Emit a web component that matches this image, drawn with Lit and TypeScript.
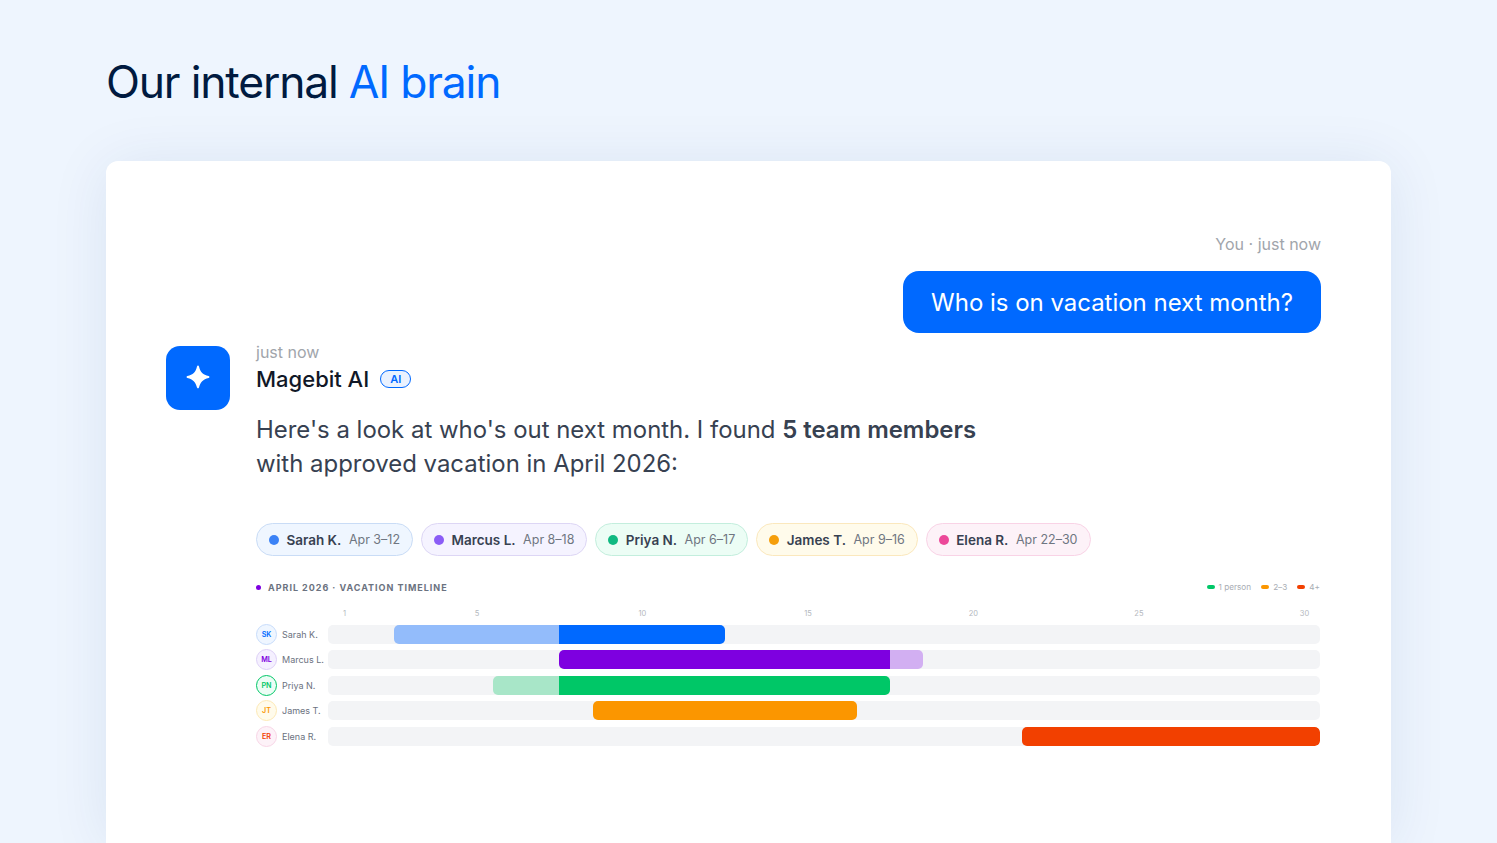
import { LitElement, html, css } from "lit";
import { customElement } from "lit/decorators.js";

const pills = [
  { n: "Sarah K.", d: "Apr 3–12", c: "#3b82f6", bg: "#eff6ff", b: "#c9dcf6" },
  { n: "Marcus L.", d: "Apr 8–18", c: "#8b5cf6", bg: "#f5f3ff", b: "#ddd6f5" },
  { n: "Priya N.", d: "Apr 6–17", c: "#10b981", bg: "#ecfdf5", b: "#c3eedd" },
  { n: "James T.", d: "Apr 9–16", c: "#f59e0b", bg: "#fffbeb", b: "#fbe8bd" },
  { n: "Elena R.", d: "Apr 22–30", c: "#ec4899", bg: "#fdf2f8", b: "#f9d3e6" },
];

const rows = [
  { n: "Sarah K.", i: "SK", c: "#0069ff", bg: "#eff6ff", b: "#c7dcfb", segs: [[3, 7, "#93bcfb"], [8, 12, "#0069ff"]] },
  { n: "Marcus L.", i: "ML", c: "#7e00e0", bg: "#f5f0ff", b: "#ddd0f7", segs: [[8, 17, "#7e00e0"], [18, 18, "#d2aff2"]] },
  { n: "Priya N.", i: "PN", c: "#00c767", bg: "#ecfdf5", b: "#00c767", segs: [[6, 7, "#a8e6c8"], [8, 17, "#00c767"]] },
  { n: "James T.", i: "JT", c: "#fb9600", bg: "#fffbeb", b: "#fde9b5", segs: [[9, 16, "#fb9600"]] },
  { n: "Elena R.", i: "ER", c: "#f24000", bg: "#fdf2f8", b: "#f8d5e6", segs: [[22, 30, "#f24000"]] },
] as const;

const ticks = [1, 5, 10, 15, 20, 25, 30];
const legend = [
  { l: "1 person", c: "#00c767" },
  { l: "2–3", c: "#fb9600" },
  { l: "4+", c: "#f24000" },
];

@customElement("app-root")
export class AppRoot extends LitElement {
  static styles = css`
    :host {
      display: flex;
      flex-direction: column;
      height: 843px;
      overflow: hidden;
      padding: 0 106px;
      box-sizing: border-box;
      background: #eef5fe;
      font-family: Inter, "Liberation Sans", sans-serif;
      color: #111827;
    }
    h1 {
      margin: 0;
      padding: 53px 0 0 0;
      height: 161px;
      flex: none;
      box-sizing: border-box;
      font-size: 44.45px;
      line-height: 58px;
      font-weight: 400;
      letter-spacing: -1.2px;
      color: #001a40;
      white-space: nowrap;
    }
    h1 span { color: #0069ff; }
    .card {
      flex: 1;
      background: #fff;
      border-radius: 12px 12px 0 0;
      box-shadow: 0 4px 60px rgba(0, 50, 120, 0.09);
      padding: 73px 70px 0 60px;
      display: flex;
      flex-direction: column;
    }
    .you {
      display: flex;
      flex-direction: column;
      align-items: flex-end;
      gap: 16px;
    }
    .meta {
      font-size: 16px;
      line-height: 21px;
      color: #a1a5ab;
    }
    .body .meta { margin-top: 1px; }
    .bubble {
      background: #0069ff;
      color: #fff;
      border-radius: 16px;
      height: 62px;
      padding: 0 28px;
      display: flex;
      align-items: center;
      font-size: 24px;
      letter-spacing: -0.02px;
    }
    .ai {
      display: flex;
      gap: 26px;
      margin-top: 8px;
    }
    .avatar {
      width: 64px;
      height: 64px;
      margin-top: 5px;
      flex: none;
      border-radius: 14px;
      background: #0069ff;
      display: flex;
      align-items: center;
      justify-content: center;
    }
    .avatar svg { width: 24px; height: 24px; margin-top: -2px; }
    .body { flex: 1; min-width: 0; }
    .name-row {
      display: flex;
      align-items: center;
      gap: 11px;
      height: 30px;
      margin-top: 1px;
      font-size: 22px;
      font-weight: 500;
      color: #111827;
    }
    .tag {
      width: 31px;
      height: 18px;
      box-sizing: border-box;
      border: 1px solid #0069ff;
      border-radius: 9px;
      background: #eaf2ff;
      color: #0069ff;
      font-size: 11px;
      font-weight: 600;
      display: flex;
      align-items: center;
      justify-content: center;
    }
    .text {
      margin: 19px 0 0;
      font-size: 23.93px;
      line-height: 34px;
      color: #374151;
    }
    .text b { font-weight: 600; color: #374151; }
    .pills {
      display: flex;
      gap: 8px;
      margin-top: 42px;
    }
    .pill {
      height: 33px;
      box-sizing: border-box;
      border: 1px solid;
      border-radius: 17px;
      padding: 0 12px;
      display: flex;
      align-items: center;
      font-size: 13.5px;
      white-space: nowrap;
    }
    .pill i {
      width: 10px;
      height: 10px;
      border-radius: 50%;
      margin-right: 7.4px;
    }
    .pill b { font-weight: 600; color: #374151; margin-right: 7.5px; }
    .pill span { color: #6f7681; font-size: 12.5px; }
    .tl-head {
      display: flex;
      align-items: center;
      justify-content: space-between;
      margin-top: 23px;
      height: 16px;
    }
    .tl-title {
      display: flex;
      align-items: center;
      gap: 7px;
      font-size: 9px;
      font-weight: 700;
      letter-spacing: 0.98px;
      color: #6b7280;
    }
    .tl-title i { width: 5px; height: 5px; border-radius: 50%; background: #7e00e0; }
    .legend {
      display: flex;
      gap: 10px;
      margin-right: 1px;
      font-size: 8.2px;
      color: #a8adb4;
    }
    .legend div { display: flex; align-items: center; gap: 4px; }
    .legend i { width: 8px; height: 4px; border-radius: 2px; }
    .axis, .track {
      display: grid;
      grid-template-columns: repeat(30, 1fr);
      flex: 1;
      min-width: 0;
    }
    .row { display: flex; align-items: center; height: 19px; }
    .axis-row { margin-top: 13px; height: 12px; }
    .spacer { width: 72px; flex: none; }
    .axis span {
      grid-row: 1;
      text-align: center;
      font-size: 7.5px;
      line-height: 12px;
      color: #b4b8be;
    }
    .rows {
      margin-top: 5px;
      display: flex;
      flex-direction: column;
      gap: 6.45px;
    }
    .who {
      width: 72px;
      flex: none;
      display: flex;
      align-items: center;
      gap: 5px;
      font-size: 9px;
      color: #6b7280;
      white-space: nowrap;
    }
    .who em {
      width: 21px;
      height: 21px;
      box-sizing: border-box;
      border: 1px solid;
      border-radius: 50%;
      display: flex;
      align-items: center;
      justify-content: center;
      font-style: normal;
      font-size: 7.2px;
      font-weight: 600;
      flex: none;
    }
    .track {
      height: 19px;
      background: #f3f4f6;
      border-radius: 5px;
      overflow: hidden;
      margin-right: 1px;
    }
    .seg { grid-row: 1; border-radius: 5px; }
    .seg.l { border-radius: 5px 0 0 5px; }
    .seg.r { border-radius: 0 5px 5px 0; }
  `;

  private segClass(count: number, idx: number) {
    if (count === 1) return "seg";
    return idx === 0 ? "seg l" : "seg r";
  }

  render() {
    return html`
      <h1>Our internal <span>AI brain</span></h1>
      <div class="card">
        <div class="you">
          <div class="meta">You · just now</div>
          <div class="bubble">Who is on vacation next month?</div>
        </div>
        <div class="ai">
          <div class="avatar">
            <svg viewBox="0 0 24 24" fill="#fff">
              <path d="M12 .6c.5 0 .8.3 1 .8C14.300 7 17 9.700 22.600 11c.5.100.8.500.8 1s-.3.900-.8 1C17 14.300 14.300 17 13 22.600c-.2.500-.5.800-1 .800s-.8-.3-1-.8C9.700 17 7 14.300 1.400 13c-.5-.1-.8-.5-.8-1s.3-.9.800-1C7 9.700 9.700 7 11 1.400c.2-.5.5-.8 1-.8z"/>
            </svg>
          </div>
          <div class="body">
            <div class="meta">just now</div>
            <div class="name-row">Magebit AI <span class="tag">AI</span></div>
            <p class="text">Here's a look at who's out next month. I found <b>5 team members</b><br>with approved vacation in April 2026:</p>
            <div class="pills">
              ${pills.map(
                (p) => html`<div class="pill" style="background:${p.bg};border-color:${p.b}">
                  <i style="background:${p.c}"></i><b>${p.n}</b><span>${p.d}</span>
                </div>`
              )}
            </div>
            <div class="tl-head">
              <div class="tl-title"><i></i>APRIL 2026 · VACATION TIMELINE</div>
              <div class="legend">
                ${legend.map((l) => html`<div><i style="background:${l.c}"></i>${l.l}</div>`)}
              </div>
            </div>
            <div class="row axis-row">
              <div class="spacer"></div>
              <div class="axis">
                ${ticks.map((t) => html`<span style="grid-column:${t}">${t}</span>`)}
              </div>
            </div>
            <div class="rows">
              ${rows.map(
                (r) => html`<div class="row">
                  <div class="who">
                    <em style="color:${r.c};background:${r.bg};border-color:${r.b}">${r.i}</em>${r.n}
                  </div>
                  <div class="track">
                    ${r.segs.map(
                      (s, i) => html`<div
                        class=${this.segClass(r.segs.length, i)}
                        style="grid-column:${s[0]} / ${s[1] + 1};background:${s[2]}"
                      ></div>`
                    )}
                  </div>
                </div>`
              )}
            </div>
          </div>
        </div>
      </div>
    `;
  }
}
